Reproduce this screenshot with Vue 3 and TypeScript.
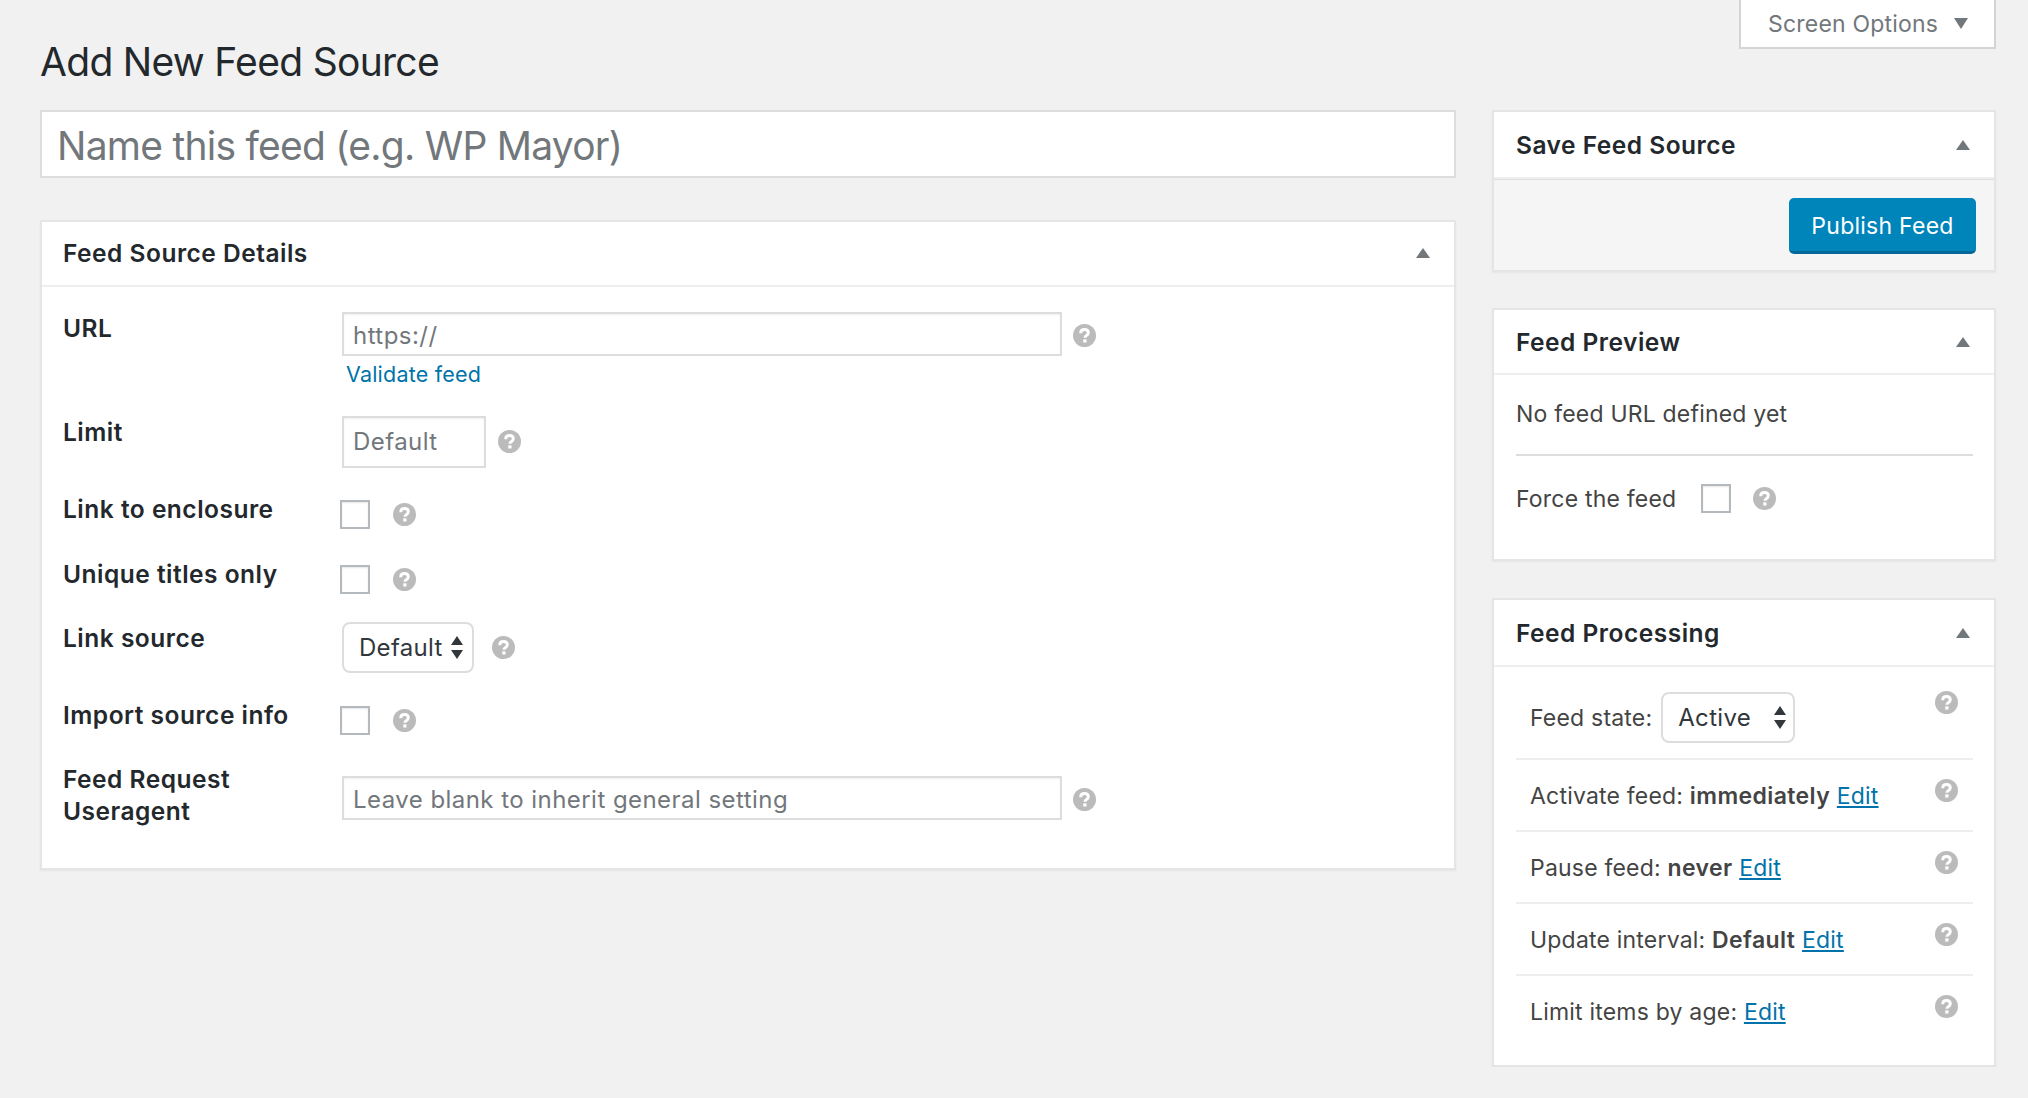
<script setup lang="ts">
import { ref } from 'vue'

const title = ref('')
const url = ref('')

const processing = [
  { label: 'Activate feed:', value: 'immediately' },
  { label: 'Pause feed:', value: 'never' },
  { label: 'Update interval:', value: 'Default' },
  { label: 'Limit items by age:', value: '' },
]
</script>

<template>
  <svg class="defs" aria-hidden="true">
    <symbol id="help" viewBox="0 0 24 24">
      <circle cx="12" cy="12" r="12" fill="#bbbbbb" />
      <path d="M8 9.6C8 7.2 9.7 5.8 12 5.8s4 1.3 4 3.4c0 2.9-3.6 2.7-3.6 5.2" fill="none" stroke="#fff" stroke-width="3" />
      <rect x="10.7" y="16" width="3.4" height="3.3" fill="#fff" />
    </symbol>
  </svg>

  <div class="page">
    <header class="top">
      <h1>Add New Feed Source</h1>
      <button class="screen-options">Screen Options <i class="tri-down"></i></button>
    </header>

    <div class="columns">
      <main class="main">
        <input v-model="title" class="title-input" placeholder="Name this feed (e.g. WP Mayor)" />

        <section class="card details">
          <div class="card-head"><h2>Feed Source Details</h2><i class="tri-up"></i></div>
          <div class="form">
            <div class="row r-url">
              <label>URL</label>
              <div class="field">
                <div class="inline">
                  <input v-model="url" class="text wide" placeholder="https://" />
                  <svg class="help"><use href="#help" /></svg>
                </div>
                <a class="validate">Validate feed</a>
              </div>
            </div>
            <div class="row r-limit">
              <label>Limit</label>
              <div class="inline">
                <input class="text short" placeholder="Default" />
                <svg class="help"><use href="#help" /></svg>
              </div>
            </div>
            <div class="row r-check first-check">
              <label>Link to enclosure</label>
              <div class="inline">
                <input type="checkbox" class="check" />
                <svg class="help"><use href="#help" /></svg>
              </div>
            </div>
            <div class="row r-check">
              <label>Unique titles only</label>
              <div class="inline">
                <input type="checkbox" class="check" />
                <svg class="help"><use href="#help" /></svg>
              </div>
            </div>
            <div class="row r-select">
              <label>Link source</label>
              <div class="inline">
                <div class="select-wrap source">
                  <select><option>Default</option></select>
                  <i class="arrows"></i>
                </div>
                <svg class="help"><use href="#help" /></svg>
              </div>
            </div>
            <div class="row r-check">
              <label>Import source info</label>
              <div class="inline">
                <input type="checkbox" class="check" />
                <svg class="help"><use href="#help" /></svg>
              </div>
            </div>
            <div class="row r-agent">
              <label>Feed Request<br />Useragent</label>
              <div class="inline">
                <input class="text wide" placeholder="Leave blank to inherit general setting" />
                <svg class="help"><use href="#help" /></svg>
              </div>
            </div>
          </div>
        </section>
      </main>

      <aside class="side">
        <section class="card save">
          <div class="card-head tall"><h2>Save Feed Source</h2><i class="tri-up"></i></div>
          <div class="save-foot"><button class="publish">Publish Feed</button></div>
        </section>

        <section class="card preview">
          <div class="card-head"><h2>Feed Preview</h2><i class="tri-up"></i></div>
          <div class="preview-body">
            <p class="no-url">No feed URL defined yet</p>
            <div class="force">
              <span>Force the feed</span>
              <input type="checkbox" class="check" />
              <svg class="help"><use href="#help" /></svg>
            </div>
          </div>
        </section>

        <section class="card processing">
          <div class="card-head tall"><h2>Feed Processing</h2><i class="tri-up"></i></div>
          <div class="proc-body">
            <div class="proc-row first">
              <div class="state">
                <span>Feed state:</span>
                <div class="select-wrap active">
                  <select><option>Active</option></select>
                  <i class="arrows"></i>
                </div>
              </div>
              <svg class="help"><use href="#help" /></svg>
            </div>
            <div v-for="item in processing" :key="item.label" class="proc-row">
              <p>{{ item.label }} <strong v-if="item.value">{{ item.value }}</strong> <a>Edit</a></p>
              <svg class="help"><use href="#help" /></svg>
            </div>
          </div>
        </section>
      </aside>
    </div>
  </div>
</template>

<style scoped>
.defs { position: absolute; width: 0; height: 0; }
.page { padding: 0 32px 0 40px; color: #444; font-family: Inter, "Noto Sans", sans-serif; font-size: 23px; letter-spacing: .2px; }
.top { display: flex; justify-content: space-between; align-items: flex-start; height: 110px; }
h1 { margin: 0; padding-top: 38px; font-size: 39px; letter-spacing: -.7px; line-height: 48px; font-weight: 400; color: #23282d; }
.screen-options {
  width: 257px; height: 49px; padding: 0 0 0 27px; text-align: left;
  background: #fff; border: 2px solid #d4d4d4; border-top: 0;
  font: 23px Inter, sans-serif; letter-spacing: .2px; color: #72777c;
}
.tri-down { display: inline-block; margin-left: 9px; border: 7px solid transparent; border-top: 11px solid #72777c; border-bottom: 0; vertical-align: 3px; }
.tri-up { display: block; border: 7px solid transparent; border-bottom: 10px solid #72777c; border-top: 0; margin-right: 24px; }

.columns { display: flex; gap: 36px; align-items: flex-start; }
.main { width: 1416px; flex: none; }
.side { flex: 1; min-width: 0; }

input, select, button { font-family: Inter, sans-serif; box-sizing: border-box; outline: 0; }
input::placeholder { color: #72777c; opacity: 1; }

.title-input {
  display: block; width: 100%; height: 68px; padding: 3px 15px 0;
  border: 2px solid #ddd; background: #fff; font-size: 39px; letter-spacing: -.75px;
}

.card { background: #fff; border: 2px solid #e5e5e5; box-shadow: 0 1px 2px rgba(0,0,0,.05); box-sizing: border-box; }
.card-head {
  display: flex; align-items: center; justify-content: space-between;
  height: 65px; box-sizing: border-box; padding: 0 0 0 22px; border-bottom: 2px solid #eee;
}
.card-head.tall { height: 67px; }
h2 { margin: 0; font-size: 24.5px; letter-spacing: .5px; font-weight: 600; color: #23282d; }

.details { margin-top: 42px; height: 650px; }
.details .card-head { padding: 0 0 2px 21px; }
.form { padding: 25px 0 0 21px; }
.row { display: flex; margin-bottom: 29px; }
.row label { width: 279px; flex: none; font-size: 24.5px; letter-spacing: .5px; font-weight: 600; line-height: 32px; color: #23282d; }
.r-url { margin-bottom: 26px; }
.r-limit { margin-bottom: 25px; }
.r-select { margin-bottom: 26px; }
.first-check { margin-bottom: 30px; }
.inline { display: flex; align-items: center; }
.text { height: 44px; padding: 2px 9px 0; border: 2px solid #ddd; background: #fff; font-size: 24px; letter-spacing: .45px; color: #32373c; box-shadow: inset 0 1px 2px rgba(0,0,0,.07); }
.wide { width: 720px; }
.short { width: 144px; height: 52px; padding: 0 9px 2px; }
.validate { display: block; margin: 3px 0 0 4px; line-height: 31px; color: #0073aa; font-size: 21.5px; }

.help { width: 23px; height: 23px; flex: none; }
.r-url .help { margin: 2px 0 0 11px; }
.r-agent .help { margin: 3px 0 0 11px; }
.r-limit .help { margin: -1px 0 0 12px; }
.r-select .help { margin-left: 18px; }
.check {
  appearance: none; width: 30px; height: 29px; margin: 0; flex: none;
  border: 2px solid #b4b9be; background: #fff; box-shadow: inset 0 1px 2px rgba(0,0,0,.1);
}
.r-check .check { margin: 7px 0 0 -2px; }
.r-check .help { margin: 7px 0 0 23px; }
.r-check { height: 35px; }
.r-agent .inline { margin-top: 13px; align-self: flex-start; }

.select-wrap { position: relative; }
.select-wrap select {
  appearance: none; display: block; height: 51px; width: 100%; padding: 0 0 0 15px;
  border: 2px solid #ddd; border-radius: 8px; background: #fff;
  font-size: 24px; letter-spacing: .3px; color: #32373c;
}
.source { width: 132px; }
.active { width: 134px; }
.arrows { position: absolute; top: 14px; right: 10px; width: 13px; height: 23px; }
.active .arrows { right: 8px; }
.arrows::before, .arrows::after { content: ""; position: absolute; left: 0; border: 6.5px solid transparent; }
.arrows::before { top: 0; border-bottom: 9px solid #32373c; border-top: 0; }
.arrows::after { bottom: 0; border-top: 9px solid #32373c; border-bottom: 0; }

.save-foot { display: flex; justify-content: flex-end; align-items: flex-start; height: 91px; padding: 18px 18px 0 0; box-sizing: border-box; background: #f5f5f5; border-top: 1px solid #ddd; }
.publish {
  width: 187px; height: 56px; padding: 2px 0 0; border: 0; border-bottom: 3px solid #006799; border-radius: 5px;
  background: #0085ba; color: #fff; font-size: 23px; letter-spacing: .25px;
}

.preview { margin-top: 36px; height: 253px; }
.preview-body { padding: 0 21px 0 22px; }
.no-url { margin: 0; height: 81px; padding-top: 23px; box-sizing: border-box; line-height: 32px; border-bottom: 2px solid #ddd; }
.force { display: flex; align-items: center; margin-top: 28px; }
.force .check { margin-left: 25px; }
.force .help { margin-left: 22px; }

.processing { margin-top: 37px; height: 469px; }
.proc-body { padding: 0 21px 0 22px; }
.proc-row {
  display: flex; justify-content: space-between; align-items: flex-start;
  height: 72px; box-sizing: border-box; padding: 18px 15px 0 14px; border-bottom: 2px solid #eee;
}
.proc-row:last-child { border-bottom: 0; }
.proc-row.first { height: 93px; padding-top: 25px; }
.proc-row .help { margin-top: 1px; }
.proc-row.first .help { margin-top: -1px; }
.proc-row p { margin: 2px 0 0; line-height: 32px; }
.proc-row strong { font-weight: 600; letter-spacing: .4px; }
.proc-row a { color: #0073aa; text-decoration: underline; }
.state { display: flex; align-items: center; gap: 9px; }
</style>

<style>
html, body { background: #f1f1f1; }
</style>
